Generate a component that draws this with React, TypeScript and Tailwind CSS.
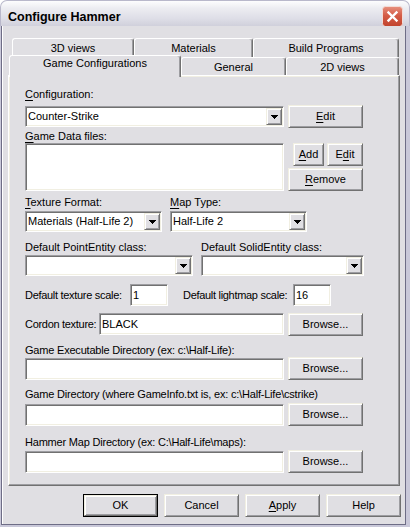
import React from "react";

const RAISED =
  "flex items-center justify-center bg-[#e0dfe3] border border-t-[#f1efe2] border-l-[#f1efe2] border-r-[#717171] border-b-[#717171] shadow-[inset_1px_1px_0_#ffffff,inset_-1px_-1px_0_#9d9da1] text-black shrink-0";
const SUNKEN =
  "bg-white border border-t-[#9d9da1] border-l-[#9d9da1] border-r-white border-b-white shadow-[inset_1px_1px_0_#717171,inset_-1px_-1px_0_#f1efe2] p-px shrink-0";

function U({ children }: { children: React.ReactNode }) {
  return <span className="underline decoration-1 underline-offset-[2px]">{children}</span>;
}

function Btn({ className, children }: { className: string; children: React.ReactNode }) {
  return <div className={RAISED + " " + className}>{children}</div>;
}

function Arrow() {
  return (
    <svg width="7" height="4" viewBox="0 0 7 4" shapeRendering="crispEdges">
      <rect x="0" y="0" width="7" height="1" fill="#000" />
      <rect x="1" y="1" width="5" height="1" fill="#000" />
      <rect x="2" y="2" width="3" height="1" fill="#000" />
      <rect x="3" y="3" width="1" height="1" fill="#000" />
    </svg>
  );
}

function Combo({ className, text }: { className: string; text?: string }) {
  return (
    <div className={SUNKEN + " flex " + className}>
      <div className="flex-1 flex items-center pl-px whitespace-nowrap overflow-hidden">{text}</div>
      <div className={RAISED + " w-[16px] h-full"}>
        <Arrow />
      </div>
    </div>
  );
}

function Edit({ className, text }: { className: string; text?: string }) {
  return (
    <div className={SUNKEN + " flex items-center pl-[2px] " + className}>
      <span className="whitespace-nowrap">{text}</span>
    </div>
  );
}

function Tab({ className, children }: { className: string; children: React.ReactNode }) {
  return (
    <div
      className={
        "flex justify-center bg-[#e0dfe3] border-l border-t border-white border-r border-r-[#717171] shadow-[inset_-1px_0_0_#9d9da1] rounded-tl-[3px] rounded-tr-[3px] shrink-0 " +
        className
      }
    >
      {children}
    </div>
  );
}

export default function App() {
  return (
    <div className="w-[410px] h-[527px] flex flex-col bg-white font-['Liberation_Sans',Arial,sans-serif] text-[11px] leading-[13px] text-black select-none">
      {/* Title bar */}
      <div className="h-[26px] shrink-0 flex items-start pl-[7px] pr-[6px] rounded-t-[7px] bg-[linear-gradient(to_bottom,#fdfdfe_0%,#ececf1_30%,#dedee7_70%,#d0d0db_100%)] border-x border-t border-[#b9b8cb]">
        <div className="pt-[10px] text-[12.5px] leading-none font-bold text-black">Configure Hammer</div>
        <div className="ml-auto mt-[5px] w-[21px] h-[21px]">
          <svg width="21" height="21" viewBox="0 0 21 21">
            <defs>
              <linearGradient id="cg" x1="0" y1="0" x2="0" y2="1">
                <stop offset="0" stopColor="#e7907e" />
                <stop offset="0.45" stopColor="#d45c46" />
                <stop offset="1" stopColor="#c1432d" />
              </linearGradient>
            </defs>
            <rect x="0.5" y="0.5" width="20" height="20" rx="3" fill="url(#cg)" stroke="#f3dcd6" />
            <path d="M6.5 6.5 L14.5 14.5 M14.5 6.5 L6.5 14.5" stroke="#ffffff" strokeWidth="2.4" strokeLinecap="square" />
          </svg>
        </div>
      </div>

      {/* Frame */}
      <div className="flex-1 flex bg-[#c9c8d9] pl-px pr-[4px] pb-[2px]">
        <div className="flex-1 flex flex-col border-l border-r border-b border-[#6e6d86]">
          <div className="flex-1 flex flex-col border-l border-white bg-[#e0dfe3]">
            {/* Tab control */}
            <div className="mt-[12px] ml-[5px] w-[392px] flex flex-col">
              <div className="flex h-[19px] pl-[4px]">
                <Tab className="w-[122px] items-start pt-[3px]">3D views</Tab>
                <Tab className="w-[119px] items-start pt-[3px]">Materials</Tab>
                <Tab className="w-[146px] items-start pt-[3px]">Build Programs</Tab>
              </div>
              <div className="flex h-[18px] pl-[1px]">
                <Tab className="w-[172px] h-[22px] -mt-[2px] relative z-10 items-start pt-[1px]">Game Configurations</Tab>
                <Tab className="w-[105px] h-[18px] items-start pt-[3px]">General</Tab>
                <Tab className="w-[113px] h-[18px] items-start pt-[3px]">2D views</Tab>
              </div>

              {/* Panel */}
              <div className="h-[411px] flex flex-col pl-[16px] border border-t-white border-l-white border-r-[#717171] border-b-[#717171] shadow-[inset_-1px_-1px_0_#9d9da1,inset_1px_1px_0_#f1efe2]">
                {/* Configuration */}
                <div className="mt-[12px] h-[13px]">
                  <U>C</U>onfiguration:
                </div>
                <div className="mt-[4px] h-[23px] flex items-center gap-[4px]">
                  <Combo className="w-[259px] h-[21px]" text="Counter-Strike" />
                  <Btn className="w-[75px] h-[23px]">
                    <U>E</U>dit
                  </Btn>
                </div>

                {/* Game data files */}
                <div className="mt-[2px] h-[13px]">
                  <U>G</U>ame Data files:
                </div>
                <div className="h-[49px] flex gap-[4px]">
                  <div className={SUNKEN + " w-[259px] h-[48px]"} />
                  <div className="w-[75px] flex flex-col gap-[2px]">
                    <div className="flex pl-[5px] gap-[3px]">
                      <Btn className="w-[31px] h-[23px]">
                        <U>A</U>dd
                      </Btn>
                      <Btn className="w-[36px] h-[23px]">
                        E<U>d</U>it
                      </Btn>
                    </div>
                    <Btn className="w-[75px] h-[23px]">
                      <U>R</U>emove
                    </Btn>
                  </div>
                </div>

                {/* Texture format / map type */}
                <div className="mt-[4px] h-[13px] flex">
                  <div className="w-[145px] shrink-0">
                    <U>T</U>exture Format:
                  </div>
                  <div>
                    <U>M</U>ap Type:
                  </div>
                </div>
                <div className="mt-[2px] h-[21px] flex gap-[8px]">
                  <Combo className="w-[137px] h-[21px]" text="Materials (Half-Life 2)" />
                  <Combo className="w-[137px] h-[21px]" text="Half-Life 2" />
                </div>

                {/* Entity classes */}
                <div className="mt-[9px] h-[13px] flex">
                  <div className="w-[176px] shrink-0">Default PointEntity class:</div>
                  <div>Default SolidEntity class:</div>
                </div>
                <div className="mt-[1px] h-[21px] flex gap-[8px]">
                  <Combo className="w-[168px] h-[21px]" />
                  <Combo className="w-[163px] h-[21px]" />
                </div>

                {/* Scales */}
                <div className="mt-[8px] h-[22px] flex items-center">
                  <div className="w-[105px] shrink-0 whitespace-nowrap tracking-[-0.3px]">Default texture scale:</div>
                  <Edit className="w-[38px] h-[22px]" text="1" />
                  <div className="ml-[15px] w-[110px] shrink-0 whitespace-nowrap tracking-[-0.3px]">Default lightmap scale:</div>
                  <Edit className="w-[38px] h-[22px]" text="16" />
                </div>

                {/* Cordon */}
                <div className="mt-[7px] h-[23px] flex items-start">
                  <div className="w-[74px] shrink-0 whitespace-nowrap self-center tracking-[-0.3px]">Cordon texture:</div>
                  <Edit className="w-[185px] h-[22px]" text="BLACK" />
                  <Btn className="ml-[4px] w-[75px] h-[23px]">Browse...</Btn>
                </div>

                {/* Game executable directory */}
                <div className="mt-[8px] h-[13px] whitespace-nowrap tracking-[-0.2px]">Game Executable Directory (ex: c:\Half-Life):</div>
                <div className="h-[23px] flex items-center gap-[4px]">
                  <Edit className="w-[259px] h-[22px]" />
                  <Btn className="w-[75px] h-[23px]">Browse...</Btn>
                </div>

                {/* Game directory */}
                <div className="mt-[8px] h-[13px] whitespace-nowrap tracking-[-0.2px]">
                  Game Directory (where GameInfo.txt is, ex: c:\Half-Life\cstrike)
                </div>
                <div className="mt-[2px] h-[23px] flex items-center gap-[4px]">
                  <Edit className="w-[259px] h-[22px]" />
                  <Btn className="w-[75px] h-[23px]">Browse...</Btn>
                </div>

                {/* Hammer map directory */}
                <div className="mt-[10px] h-[13px] whitespace-nowrap tracking-[-0.2px]">Hammer Map Directory (ex: C:\Half-Life\maps):</div>
                <div className="mt-px h-[23px] flex items-center gap-[4px]">
                  <Edit className="w-[259px] h-[22px]" />
                  <Btn className="w-[75px] h-[23px]">Browse...</Btn>
                </div>
              </div>
            </div>

            {/* Bottom buttons */}
            <div className="mt-[8px] pl-[80px] flex gap-[6px]">
              <div className="w-[75px] h-[23px] border border-black flex">
                <Btn className="flex-1 h-full">OK</Btn>
              </div>
              <Btn className="w-[75px] h-[23px]">Cancel</Btn>
              <Btn className="w-[75px] h-[23px]">
                <U>A</U>pply
              </Btn>
              <Btn className="w-[75px] h-[23px]">Help</Btn>
            </div>
          </div>
        </div>
      </div>
    </div>
  );
}
